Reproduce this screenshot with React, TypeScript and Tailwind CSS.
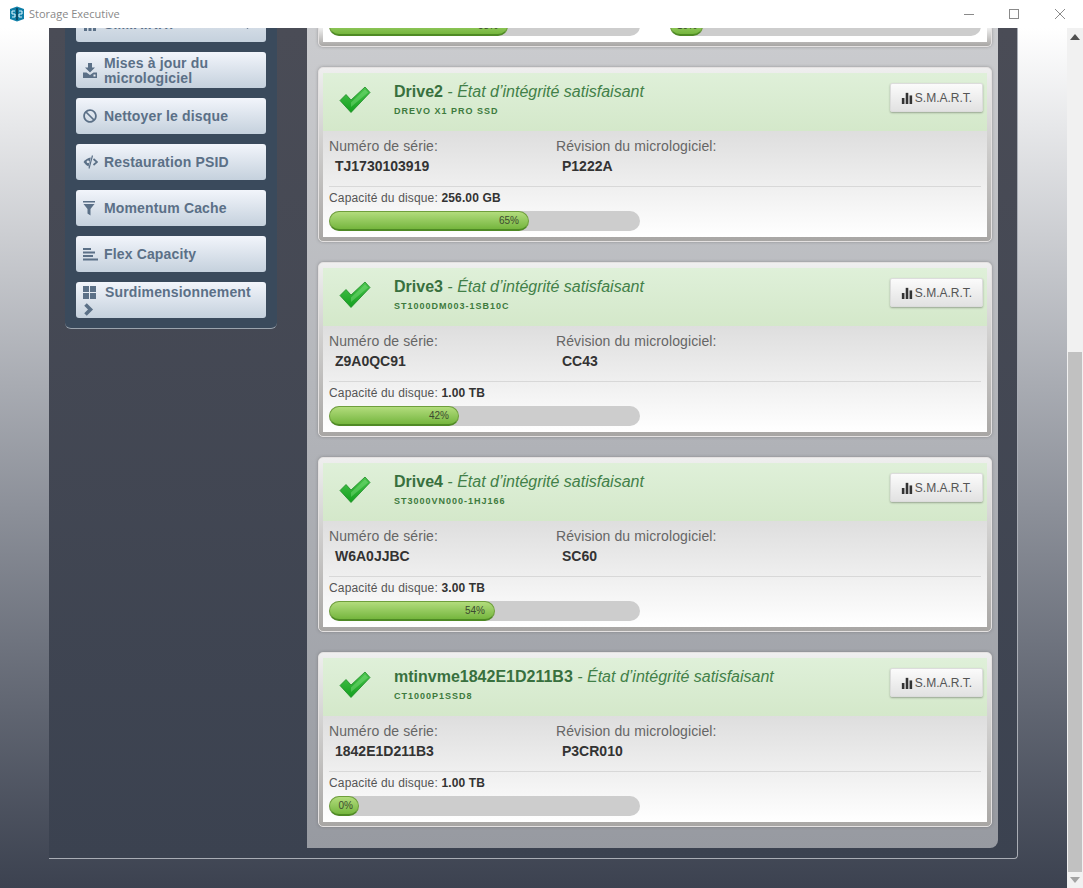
import { FaBan } from 'react-icons/fa'

const drives = [
  { name: 'Drive2', model: 'DREVO X1 PRO SSD', serial: 'TJ1730103919', firmware: 'P1222A', capacity: '256.00 GB', pct: 65, fill: 200 },
  { name: 'Drive3', model: 'ST1000DM003-1SB10C', serial: 'Z9A0QC91', firmware: 'CC43', capacity: '1.00 TB', pct: 42, fill: 130 },
  { name: 'Drive4', model: 'ST3000VN000-1HJ166', serial: 'W6A0JJBC', firmware: 'SC60', capacity: '3.00 TB', pct: 54, fill: 166 },
  { name: 'mtinvme1842E1D211B3', model: 'CT1000P1SSD8', serial: '1842E1D211B3', firmware: 'P3CR010', capacity: '1.00 TB', pct: 0, fill: 30 },
]

function LogoIcon() {
  return (
    <svg width="16" height="16" viewBox="0 0 16 16">
      <path d="M8 0.5 L15 3 V13 L8 15.5 L1 13 V3 Z" fill="#0f7fa8" />
      <path d="M7.5 2 V14 M8.5 2 V14" stroke="#063f58" strokeWidth="0.8" />
      <path d="M3 5 H6 M3 8 H6 M3 11 H6 M10 5 H13 M10 8 H13 M10 11 H13 M3 5 V8 M6 8 V11 M13 5 V8 M10 8 V11" stroke="#d8f2fb" strokeWidth="1.1" fill="none" />
    </svg>
  )
}

function BarsIcon({ color = '#5b7087', size = 14 }: { color?: string; size?: number }) {
  return (
    <svg width={size} height={size} viewBox="0 0 14 14" fill={color}>
      <rect x="1" y="7" width="3" height="7" />
      <rect x="5.5" y="1" width="3" height="13" />
      <rect x="10" y="4" width="3" height="10" />
    </svg>
  )
}

function DownloadIcon() {
  return (
    <svg width="14" height="15" viewBox="0 0 14 15" fill="#5b7087">
      <path d="M5 0 H9 V4.5 H12 L7 9.5 L2 4.5 H5 Z" />
      <path d="M0 9.5 H3.5 L7 12 L10.5 9.5 H14 V15 H0 Z" />
      <rect x="10.5" y="11.5" width="2" height="2" fill="#e6ebf2" />
    </svg>
  )
}

function EyeOffIcon() {
  return (
    <svg width="15" height="14" viewBox="0 0 15 14" fill="none" stroke="#5b7087">
      <path d="M0.5 7 Q3.5 3 7.8 2.5 L5.6 11.5 Q3 10.5 0.5 7 Z" fill="#5b7087" stroke="none" />
      <circle cx="5" cy="6.8" r="1.4" fill="#e0e6ee" stroke="none" />
      <path d="M10.5 4 L14 7 L10.5 10" strokeWidth="1.7" />
      <path d="M9.5 0.5 L6 13.5" strokeWidth="1.2" />
    </svg>
  )
}

function FilterIcon() {
  return (
    <svg width="12" height="15" viewBox="0 0 12 15" fill="#5b7087">
      <rect x="0" y="0" width="12" height="1.5" />
      <path d="M0.5 3 H11.5 L7.5 8 V14.5 L4.5 12.5 V8 Z" />
    </svg>
  )
}

function AlignIcon() {
  return (
    <svg width="15" height="14" viewBox="0 0 15 14" fill="#5b7087">
      <rect x="0" y="1" width="8" height="2" />
      <rect x="0" y="4.5" width="12" height="2" />
      <rect x="0" y="8" width="10" height="2" />
      <rect x="0" y="11.5" width="15" height="2" />
    </svg>
  )
}

function GridIcon() {
  return (
    <svg width="13" height="13" viewBox="0 0 13 13" fill="#5b7087">
      <rect x="0" y="0" width="6" height="6" />
      <rect x="7" y="0" width="6" height="6" />
      <rect x="0" y="7" width="6" height="6" />
      <rect x="7" y="7" width="6" height="6" />
    </svg>
  )
}

function ChevronIcon({ down = false }: { down?: boolean }) {
  return (
    <svg width="11" height="13" viewBox="0 0 11 13" fill="none" stroke="#5b7087" strokeWidth="3.6" className={down ? 'rotate-90' : ''}>
      <path d="M2.5 1.5 L7.5 6.5 L2.5 11.5" />
    </svg>
  )
}

function CheckIcon() {
  return (
    <svg width="32" height="28" viewBox="0 0 32 28">
      <defs>
        <linearGradient id="checkFill" x1="0" y1="0" x2="0" y2="1">
          <stop offset="0" stopColor="#4cc44e" />
          <stop offset="1" stopColor="#12a01e" />
        </linearGradient>
      </defs>
      <path d="M1 14.5 L7 8.5 L12 14 L26 1 L31 6.5 L12 26.5 Z" fill="url(#checkFill)" stroke="#1c8a24" strokeWidth="0.8" strokeLinejoin="round" />
      <path d="M12 16.5 L26 3.5 L29 6.5 L12 21 Z" fill="#7ee07f" opacity="0.45" />
    </svg>
  )
}

function NavButton({ icon, children }: { icon: React.ReactNode; children: React.ReactNode }) {
  return (
    <div className="flex h-[36px] items-center rounded-[3px] bg-linear-to-b from-[#f2f5fb] to-[#c5d1dd] pl-[7px] text-[14px] leading-[15px] font-bold tracking-[0.15px] text-[#5b7087]">
      <span className="flex w-[21px] shrink-0 items-center">{icon}</span>
      <span className="pt-[1px]">{children}</span>
    </div>
  )
}

function ProgressBar({ fill, label }: { fill: number; label: string }) {
  return (
    <div className="h-[20px] w-[311px] rounded-full bg-[#cdcdcd]">
      <div
        className={`flex h-[20px] items-center justify-end rounded-full border border-b-2 border-[#6f9f3c] border-b-[#4f8a25] bg-linear-to-b from-[#b2dc7c] to-[#75b63d] text-[10px] text-[#3c4a30] ${fill < 40 ? 'pr-[5px]' : 'pr-[9px]'}`}
        style={{ width: fill }}
      >
        {label}
      </div>
    </div>
  )
}

function CardFrame({ className, children }: { className: string; children: React.ReactNode }) {
  return (
    <div className={`rounded-[5px] border border-[#e4e1e1] bg-linear-to-b from-[#efefef] to-[#a8a6a4] shadow-[0_0_3px_rgba(90,90,90,0.5)] ${className}`}>
      {children}
    </div>
  )
}

function DriveCard({ drive }: { drive: (typeof drives)[number] }) {
  return (
    <CardFrame className="h-[175px] px-[4px] pt-[5px] pb-[4px]">
      <div className="flex h-[58px] items-start bg-linear-to-b from-[#dff0d9] to-[#d4e8ca] pt-[9px] pr-[4px] pl-[16px]">
        <div className="w-[55px] shrink-0 pt-[4px]">
          <CheckIcon />
        </div>
        <div className="flex-1">
          <div className="text-[16px] leading-[20px] text-[#428048]">
            <span className="font-bold text-[#38703e]">{drive.name}</span>
            <span className="italic"> - État d’intégrité satisfaisant</span>
          </div>
          <div className="mt-[3px] text-[9px] leading-[12px] font-bold tracking-[1px] text-[#3d7a3d]">{drive.model}</div>
        </div>
        <button className="mt-px flex h-[29px] w-[93px] items-center justify-center gap-[2px] rounded-[2px] border border-[#dcdcdc] bg-linear-to-b from-[#fbfbfb] to-[#e2e2e2] text-[12px] text-[#555] shadow-[0_1px_2px_rgba(0,0,0,0.3)]">
          <BarsIcon color="#333" size={12} /> S.M.A.R.T.
        </button>
      </div>
      <div className="h-[106px] bg-linear-to-b from-[#dedede] to-white px-[6px] pt-[7px]">
        <div className="flex h-[49px] border-b border-[#d8d8d8] tracking-[0.1px]">
          <div className="w-[227px]">
            <div className="text-[14px] leading-[17px] text-[#666]">Numéro de série:</div>
            <div className="mt-[3px] pl-[6px] text-[14px] leading-[17px] font-bold tracking-normal text-[#333]">{drive.serial}</div>
          </div>
          <div>
            <div className="text-[14px] leading-[17px] text-[#666]">Révision du micrologiciel:</div>
            <div className="mt-[3px] pl-[6px] text-[14px] leading-[17px] font-bold tracking-normal text-[#333]">{drive.firmware}</div>
          </div>
        </div>
        <div className="mt-[4px] text-[12px] leading-[14px] tracking-[0.15px] text-[#555]">
          Capacité du disque: <span className="font-bold text-[#333]">{drive.capacity}</span>
        </div>
        <div className="mt-[6px]">
          <ProgressBar fill={drive.fill} label={`${drive.pct}%`} />
        </div>
      </div>
    </CardFrame>
  )
}

export default function App() {
  return (
    <div className="flex h-[888px] w-[1083px] flex-col overflow-hidden bg-white font-['Liberation_Sans',Arial,sans-serif]">
      <div className="flex h-[28px] shrink-0 items-center bg-white pl-[9px]">
        <LogoIcon />
        <span className="ml-[4px] font-['Open_Sans',sans-serif] text-[11px] text-[#888]">Storage Executive</span>
        <div className="ml-auto flex items-center text-[#888]">
          <svg width="102" height="12" viewBox="0 0 102 12" fill="none" stroke="#8a8a8a" className="mr-[17px]">
            <path d="M0 6.5 H10" />
            <rect x="45.5" y="1.5" width="9" height="9" />
            <path d="M91 1 L101 11 M101 1 L91 11" />
          </svg>
        </div>
      </div>

      <div className="flex min-h-0 flex-1">
        <div className="flex min-w-0 flex-1 bg-linear-to-b from-white to-[#3c4250] pr-[49px] pb-[29px] pl-[49px]">
          <div className="flex w-[970px] gap-[30px] overflow-hidden rounded-br-[4px] border-r border-b border-[#a9adb5] bg-linear-to-b from-[#4a4c56] to-[#3b4250] pb-[10px] pl-[16px]">
            <div className="w-[212px] shrink-0 self-start rounded-b-[6px] border-b border-[#9aa3ad] bg-[#3a4a5c] px-[11px] pb-[10px]">
              <div className="flex flex-col gap-[10px]">
                <div className="-mt-[22px] flex h-[36px] items-center rounded-[3px] bg-linear-to-b from-[#e6ebf2] to-[#c5d1dd] pr-[13px] pl-[7px] text-[14px] font-bold tracking-[0.15px] text-[#5b7087]">
                  <span className="w-[21px]"><BarsIcon /></span>
                  <span>S.M.A.R.T.</span>
                  <span className="ml-auto"><ChevronIcon down /></span>
                </div>
                <NavButton icon={<DownloadIcon />}>
                  Mises à jour du<br />micrologiciel
                </NavButton>
                <NavButton icon={<FaBan size={14} color="#5b7087" />}>Nettoyer le disque</NavButton>
                <NavButton icon={<EyeOffIcon />}>Restauration PSID</NavButton>
                <NavButton icon={<FilterIcon />}>Momentum Cache</NavButton>
                <NavButton icon={<AlignIcon />}>Flex Capacity</NavButton>
                <div className="flex h-[36px] flex-wrap content-start rounded-[3px] bg-linear-to-b from-[#f2f5fb] to-[#c5d1dd] pt-[3px] pl-[7px] text-[14px] leading-[15px] font-bold tracking-[0.15px] text-[#5b7087]">
                  <span className="w-[22px] pt-px"><GridIcon /></span>
                  <span>Surdimensionnement</span>
                  <span className="mt-[3px] w-full"><ChevronIcon /></span>
                </div>
              </div>
            </div>

            <div className="flex w-[691px] shrink-0 flex-col gap-[20px] rounded-br-[8px] bg-linear-to-b from-[#cbcccf] to-[#979aa1] pr-[6px] pb-[21px] pl-[11px]">
              <CardFrame className="h-[19px] rounded-t-none border-t-0 px-[4px] pb-[4px]">
                <div className="h-[14px] overflow-hidden bg-white px-[6px]">
                  <div className="-mt-[12px] flex justify-between">
                    <ProgressBar fill={179} label="58%" />
                    <ProgressBar fill={33} label="10%" />
                  </div>
                </div>
              </CardFrame>
              {drives.map((drive) => (
                <DriveCard key={drive.name} drive={drive} />
              ))}
            </div>
          </div>
        </div>

        <div className="flex w-[16px] shrink-0 flex-col items-center bg-[#f1f1f1]">
          <svg width="10" height="6" viewBox="0 0 10 6" fill="#505050" className="mt-[6px]">
            <path d="M5 0 L10 6 H0 Z" />
          </svg>
          <div className="mt-[312px] h-[520px] w-[14px] bg-[#c1c1c1]" />
          <svg width="10" height="6" viewBox="0 0 10 6" fill="#a3a3a3" className="mt-[5px]">
            <path d="M0 0 H10 L5 6 Z" />
          </svg>
        </div>
      </div>
    </div>
  )
}
